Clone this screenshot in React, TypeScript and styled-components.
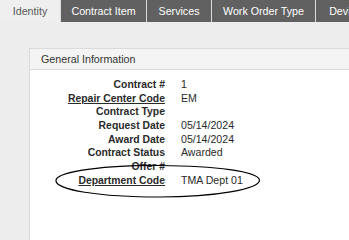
import React from 'react';
import styled, { createGlobalStyle } from 'styled-components';

const GlobalStyle = createGlobalStyle`
  html, body {
    margin: 0;
    padding: 0;
    background-color: #ededed;
  }
`;

const tabs = [
  { label: 'Identity', width: 60, active: true },
  { label: 'Contract Item', width: 86 },
  { label: 'Services', width: 65 },
  { label: 'Work Order Type', width: 104 },
  { label: 'Device', width: 60 },
];

const fields = [
  { label: 'Contract #', value: '1' },
  { label: 'Repair Center Code', value: 'EM', link: true },
  { label: 'Contract Type', value: '' },
  { label: 'Request Date', value: '05/14/2024' },
  { label: 'Award Date', value: '05/14/2024' },
  { label: 'Contract Status', value: 'Awarded' },
  { label: 'Offer #', value: '' },
  { label: 'Department Code', value: 'TMA Dept 01', link: true },
];

const App = () => {
  return (
    <>
      <GlobalStyle />
      <PageLayout>
        <TabBar>
          {tabs.map((tab) => (
            <Tab key={tab.label} $width={tab.width} $active={!!tab.active}>
              {tab.label}
            </Tab>
          ))}
        </TabBar>
        <ContentLayout>
          <Panel>
            <PanelHeader>General Information</PanelHeader>
            <PanelBody>
              <FormGrid>
                {fields.map((field) => (
                  <React.Fragment key={field.label}>
                    <FieldLabel $link={!!field.link}>{field.label}</FieldLabel>
                    <FieldValue>{field.value}</FieldValue>
                  </React.Fragment>
                ))}
              </FormGrid>
              {/* hand drawn ring round the department code */}
              <Annotation width="215" height="42" viewBox="0 0 215 42">
                <path
                  d="M 6 20 C 8 11, 60 5, 110 5.5 C 165 6, 208 11, 209.5 20 C 210 29, 165 37, 110 37 C 50 37, 4 30, 6 20 Z"
                  fill="none"
                  stroke="#000"
                  strokeWidth="1.2"
                />
              </Annotation>
            </PanelBody>
          </Panel>
        </ContentLayout>
      </PageLayout>
    </>
  );
};

export default App;

const PageLayout = styled.div`
  display: flex;
  flex-direction: column;
  min-height: 100vh;
  overflow: hidden;
  background-color: #ededed;
  font-family: 'Liberation Sans', Arial, sans-serif;
`;

const TabBar = styled.div`
  display: flex;
  height: 22px;
  white-space: nowrap;
  overflow: hidden;
`;

const Tab = styled.div<{ $width: number; $active: boolean }>`
  flex: 0 0 auto;
  width: ${(p) => p.$width}px;
  box-sizing: border-box;
  text-align: center;
  font-size: 10.7px;
  line-height: 22px;
  color: ${(p) => (p.$active ? '#585858' : '#ffffff')};
  background-color: ${(p) => (p.$active ? '#efefef' : '#616161')};

  & + & {
    border-left: 1px solid #dcdcdc;
  }

  &:nth-child(2) {
    border-left: none;
  }
`;

const ContentLayout = styled.div`
  flex: 1;
  display: flex;
  padding: 26px 0 0 29px;
`;

const Panel = styled.div`
  flex: 1;
  min-height: 170px;
  background-color: #ffffff;
  border: 1px solid #dadada;
  border-right: none;
  border-bottom: none;
`;

const PanelHeader = styled.div`
  height: 20px;
  line-height: 20px;
  padding-left: 11px;
  font-size: 10.7px;
  color: #333333;
  background-color: #f4f4f4;
  border-bottom: 1px solid #dadada;
`;

const PanelBody = styled.div`
  position: relative;
  padding-top: 8px;
`;

const FormGrid = styled.div`
  display: grid;
  grid-template-columns: 135px auto;
  column-gap: 16px;
  grid-auto-rows: 13.7px;
  align-items: center;
`;

const FieldLabel = styled.div<{ $link: boolean }>`
  text-align: right;
  font-size: 10.4px;
  font-weight: 700;
  line-height: 13.7px;
  color: #2a2a2a;
  text-decoration: ${(p) => (p.$link ? 'underline' : 'none')};
`;

const FieldValue = styled.div`
  font-size: 10.6px;
  line-height: 13.7px;
  color: #2a2a2a;
`;

const Annotation = styled.svg`
  position: absolute;
  left: 20px;
  top: 90px;
  overflow: visible;
`;
